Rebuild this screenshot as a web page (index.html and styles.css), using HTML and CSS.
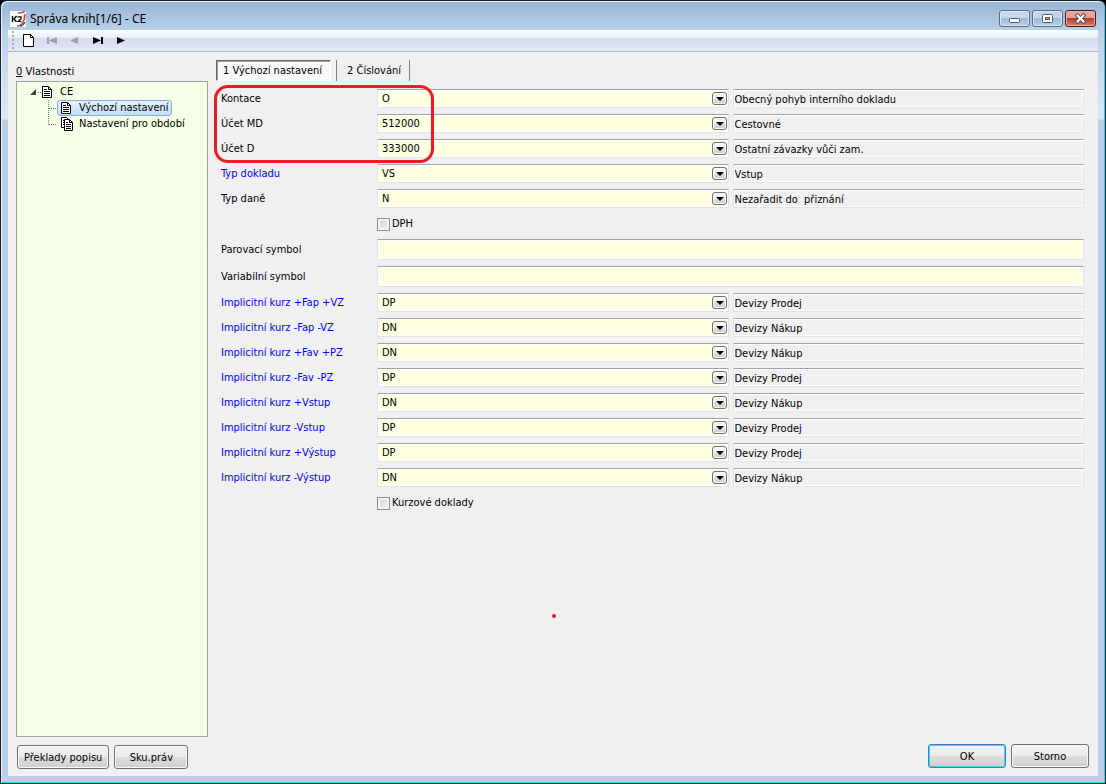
FILE: index.html
```html
<!DOCTYPE html>
<html lang="cs">
<head>
<meta charset="utf-8">
<title>Správa knih[1/6] - CE</title>
<link rel="stylesheet" href="styles.css">
</head>
<body>
<svg class="defs" aria-hidden="true">
  <symbol id="doc" viewBox="0 0 11 12"><path d="M.5.5h6l3 3v8h-9z" fill="#fff" stroke="#000"/><path d="M6.500.5v3h3M2 3.500h3M2 5.500h6M2 7.500h6M2 9.500h6" fill="none" stroke="#000"/></symbol>
  <symbol id="docs" viewBox="0 0 13 14"><path d="M.5.5h5l2 2v8h-7z" fill="#fff" stroke="#000"/><path d="M2 3.500h2M2 5.500h2M2 7.500h2" stroke="#000"/><path d="M3.500 2.500h5l3 3v8h-8z" fill="#fff" stroke="#000"/><path d="M8.500 2.500v3h3M5 5.500h2M5 7.500h5M5 9.500h5M5 11.500h5" fill="none" stroke="#000"/></symbol>
</svg>
<div class="window">
  <header class="titlebar">
    <svg class="logo" viewBox="0 0 16 16" aria-hidden="true"><rect width="16" height="16" fill="#fff"/><path d="M8 2c3 0 5 0 7-2M7 15c5 0 8-5 8-12" fill="none" stroke="#c2404a" stroke-width="1.500"/><path d="M11 13c2-3 3-6 2-9" fill="none" stroke="#e8a45c"/><path d="M10 15c3 0 4-2 5-4" fill="none" stroke="#51488f" stroke-width="1.500"/><path d="M2.500 5v6M6.500 5L4 8l2.500 3" fill="none" stroke="#111" stroke-width="1.500"/><path d="M7.500 5.800h3.500v2L8.200 10.300h3.300" fill="none" stroke="#111" stroke-width="1.300"/></svg>
    <h1 class="title">Správa knih[1/6] - CE</h1>
    <div class="window-buttons">
      <button class="win-btn" type="button" aria-label="Minimalizovat"><svg width="13" height="11" viewBox="0 0 13 11"><rect x="1.500" y="5.500" width="10" height="4" rx="1" fill="#fff" stroke="#535666"/></svg></button>
      <button class="win-btn" type="button" aria-label="Maximalizovat"><svg width="13" height="11" viewBox="0 0 13 11"><rect x="1.500" y="1.500" width="10" height="8" rx="1" fill="#fff" stroke="#535666"/><rect x="4.500" y="4.500" width="4" height="2" fill="#9dbbd8" stroke="#535666"/></svg></button>
      <button class="win-btn close" type="button" aria-label="Zavřít"><svg width="13" height="11" viewBox="0 0 13 11"><path d="M3.500 2.500l6 6M9.500 2.500l-6 6" stroke="#535666" stroke-width="4" stroke-linecap="square"/><path d="M3.500 2.500l6 6M9.500 2.500l-6 6" stroke="#fff" stroke-width="2" stroke-linecap="square"/></svg></button>
    </div>
  </header>
  <div class="client">
    <nav class="toolbar" aria-label="Panel nástrojů">
      <span class="grip"></span>
      <button class="tool" type="button" aria-label="Nový"><svg width="12" height="13" viewBox="0 0 12 13"><path d="M1 .5h6.500l3 3v9H.5V.5z" fill="#fff" stroke="#000"/><path d="M7.500.5v3h3" fill="none" stroke="#000"/></svg></button>
      <button class="tool" type="button" aria-label="První" disabled><svg width="12" height="9" viewBox="0 0 12 9"><path d="M1 1h2v7H1zM3 4.500L11 1v7z"/></svg></button>
      <button class="tool" type="button" aria-label="Předchozí" disabled><svg width="12" height="9" viewBox="0 0 12 9"><path d="M1 4.500L9 1v7z"/></svg></button>
      <button class="tool" type="button" aria-label="Poslední"><svg width="12" height="9" viewBox="0 0 12 9"><path d="M1 1l8 3.500L1 8zM9 1h2v7H9z"/></svg></button>
      <button class="tool" type="button" aria-label="Další"><svg width="12" height="9" viewBox="0 0 12 9"><path d="M2 1l8 3.500L2 8z"/></svg></button>
    </nav>
    <main class="main">
      <section class="side">
        <h2 class="side-title"><u>0</u> Vlastnosti</h2>
        <div class="tree" role="tree" aria-label="Vlastnosti">
          <div class="node root" role="treeitem" aria-expanded="true">
            <svg width="12" height="16" viewBox="0 0 12 16"><path d="M6 5v6H0z" fill="#404040"/><path d="M8 8.500h4" stroke="#808080" stroke-dasharray="1 1"/></svg>
            <svg width="11" height="12"><use href="#doc"/></svg>
            <span class="node-text">CE</span>
          </div>
          <div class="node child" role="treeitem" aria-selected="true">
            <svg width="9" height="16" viewBox="0 0 9 16"><path d="M.5 0v16M1 8.500h8" stroke="#808080" stroke-dasharray="1 1"/></svg>
            <span class="node-body selected"><svg width="13" height="12" viewBox="0 0 13 12"><use href="#doc" width="11" height="12"/></svg><span class="node-text">Výchozí nastavení</span></span>
          </div>
          <div class="node child" role="treeitem">
            <svg width="9" height="16" viewBox="0 0 9 16"><path d="M.5 0v9M1 8.500h8" stroke="#808080" stroke-dasharray="1 1"/></svg>
            <span class="node-body"><svg width="13" height="14"><use href="#docs"/></svg><span class="node-text">Nastavení pro období</span></span>
          </div>
        </div>
        <div class="buttons">
          <button class="btn" type="button">Překlady popisu</button>
          <button class="btn narrow" type="button">Sku.práv</button>
        </div>
      </section>
      <section class="content">
        <div class="tabs" role="tablist">
          <button class="tab active" type="button" role="tab" aria-selected="true">1 Výchozí nastavení</button>
          <button class="tab" type="button" role="tab" aria-selected="false">2 Číslování</button>
        </div>
        <form class="form" id="form">
          <span class="highlight"></span>
          <label for="f1">Kontace</label><span class="combo"><select id="f1"><option>O</option></select></span><input readonly aria-label="Popis: Kontace" value="Obecný pohyb interního dokladu">
          <label for="f2">Účet MD</label><span class="combo"><select id="f2"><option>512000</option></select></span><input readonly aria-label="Popis: Účet MD" value="Cestovné">
          <label for="f3">Účet D</label><span class="combo"><select id="f3"><option>333000</option></select></span><input readonly aria-label="Popis: Účet D" value="Ostatní závazky vůči zam.">
          <label class="link" for="f4">Typ dokladu</label><span class="combo"><select id="f4"><option>VS</option></select></span><input readonly aria-label="Popis: Typ dokladu" value="Vstup">
          <label for="f5">Typ daně</label><span class="combo"><select id="f5"><option>N</option></select></span><input readonly aria-label="Popis: Typ daně" value="Nezařadit do  přiznání">
          <label class="check"><input type="checkbox">DPH</label>
          <label for="f6">Parovací symbol</label><input class="wide" id="f6" type="text">
          <label for="f7">Variabilní symbol</label><input class="wide" id="f7" type="text">
          <label class="link" for="k1">Implicitní kurz +Fap +VZ</label><span class="combo"><select id="k1"><option>DP</option></select></span><input readonly aria-label="Popis: +Fap +VZ" value="Devizy Prodej">
          <label class="link" for="k2">Implicitní kurz -Fap -VZ</label><span class="combo"><select id="k2"><option>DN</option></select></span><input readonly aria-label="Popis: -Fap -VZ" value="Devizy Nákup">
          <label class="link" for="k3">Implicitní kurz +Fav +PZ</label><span class="combo"><select id="k3"><option>DN</option></select></span><input readonly aria-label="Popis: +Fav +PZ" value="Devizy Nákup">
          <label class="link" for="k4">Implicitní kurz -Fav -PZ</label><span class="combo"><select id="k4"><option>DP</option></select></span><input readonly aria-label="Popis: -Fav -PZ" value="Devizy Prodej">
          <label class="link" for="k5">Implicitní kurz +Vstup</label><span class="combo"><select id="k5"><option>DN</option></select></span><input readonly aria-label="Popis: +Vstup" value="Devizy Nákup">
          <label class="link" for="k6">Implicitní kurz -Vstup</label><span class="combo"><select id="k6"><option>DP</option></select></span><input readonly aria-label="Popis: -Vstup" value="Devizy Prodej">
          <label class="link" for="k7">Implicitní kurz +Výstup</label><span class="combo"><select id="k7"><option>DP</option></select></span><input readonly aria-label="Popis: +Výstup" value="Devizy Prodej">
          <label class="link" for="k8">Implicitní kurz -Výstup</label><span class="combo"><select id="k8"><option>DN</option></select></span><input readonly aria-label="Popis: -Výstup" value="Devizy Nákup">
          <label class="check"><input type="checkbox">Kurzové doklady</label>
          <span class="dot"></span>
        </form>
        <div class="buttons end">
          <button class="btn default" type="submit" form="form">OK</button>
          <button class="btn" type="button">Storno</button>
        </div>
      </section>
    </main>
  </div>
</div>
</body>
</html>
```
FILE: styles.css
```css
* { box-sizing: border-box; }

body {
  margin: 0;
  background: #000;
  font: 11px/16px "DejaVu Sans Condensed", Tahoma, "DejaVu Sans", sans-serif;
  color: #000;
}

button, input, select { font: inherit; color: inherit; }

.defs { position: absolute; width: 0; height: 0; }

.window {
  display: flex;
  flex-direction: column;
  min-height: 100vh;
  padding: 1px 6px 6px;
  border: 1px solid #1c2430;
  border-radius: 7px 7px 0 0;
  background: linear-gradient(#98b4d4, #b9d1ea 30px, #dce8f5 118px, #b9d1ea 119px);
  box-shadow: inset 1px 1px #e3eef9, inset -1px -1px #35cdf2;
}

.titlebar {
  display: flex;
  align-items: center;
  height: 28px;
  padding: 5px 3px 0;
}

.logo { width: 16px; height: 16px; }

.title { margin: 0 0 0 4px; font: 12px/16px "Noto Sans", sans-serif; }

.window-buttons { display: flex; gap: 2px; margin-left: auto; }

.win-btn {
  display: grid;
  place-items: center;
  width: 31px;
  height: 17px;
  padding: 0;
  border: 1px solid #5b6b83;
  border-radius: 3px;
  background: linear-gradient(#c5d7ea 50%, #9fbad6 50%, #b9d1ea);
  box-shadow: inset 0 0 0 1px #dbe7f4;
}

.win-btn.close {
  border-color: #431422;
  background: linear-gradient(#e5a497 50%, #b93a22 50%, #d88468);
  box-shadow: inset 0 0 0 1px #e7b5a9;
}

.client {
  display: flex;
  flex: 1;
  flex-direction: column;
  margin: 0 1px 1px;
  background: #f0f0f0;
}

.toolbar {
  display: flex;
  align-items: center;
  gap: 3px;
  height: 22px;
  padding-left: 4px;
  border-bottom: 1px solid #b0b5cc;
  background: linear-gradient(#fff, #e9edf8 8px, #d3daef 8px, #e3e8f6);
}

.grip { width: 2px; height: 20px; margin-right: 2px; background: repeating-linear-gradient(#a8adba 0 2px, transparent 2px 4px); }

.tool {
  display: grid;
  place-items: center;
  width: 20px;
  height: 20px;
  padding: 0;
  border: 0;
  background: none;
}

.tool:disabled { fill: #a0a0a0; }

.main { display: flex; flex: 1; gap: 8px; padding: 8px 9px 7px 8px; }

.side { display: flex; flex-direction: column; width: 192px; }

.side-title { margin: 4px 0 1px; font: inherit; }

.tree {
  flex: 1;
  margin-bottom: 8px;
  padding: 2px 13px;
  border: 1px solid #a0a0a0;
  background: #f5ffe6;
}

.node { display: flex; align-items: center; height: 16px; white-space: nowrap; }
.root .node-text { margin-left: 7px; }
.child { padding-left: 18px; }
.node-body { display: flex; align-items: center; height: 16px; gap: 5px; padding: 0 2px 0 3px; border: 1px solid transparent; }
.selected { border-color: #84acdd; border-radius: 3px; background: linear-gradient(#e5f1fc, #c4ddf8); }

.buttons { display: flex; gap: 5px; padding-left: 1px; }
.end { justify-content: flex-end; margin-top: auto; padding: 0 0 1px; }

.btn {
  min-width: 78px;
  height: 24px;
  padding: 1px 6px 0;
  border: 1px solid #707070;
  border-radius: 3px;
  background: linear-gradient(#f2f2f2, #ebebeb 50%, #dddddd 50%, #cfcfcf);
  box-shadow: inset 0 0 0 1px #fafafa;
  white-space: nowrap;
}

.narrow { min-width: 74px; }
.default { border-color: #3c7fb1; box-shadow: inset 0 0 0 1px #48d0f5; }

.content { display: flex; flex: 1; flex-direction: column; min-width: 0; }

.tabs { display: flex; gap: 5px; }

.tab {
  height: 21px;
  padding: 0 8px 0 10px;
  border: solid #808080;
  border-width: 0 1px 0 1px;
  background: none;
}

.tab.active {
  padding: 1px 8px 0 6px;
  border: 1px solid;
  border-color: #696969 #fff #fff #696969;
  background: repeating-conic-gradient(#fff 0 25%, #f0f0f0 0 50%) 0 0 / 2px 2px;
  box-shadow: inset 1px 1px #a0a0a0;
}

.form {
  position: relative;
  display: grid;
  grid-template-columns: 152px minmax(0, 1fr) minmax(0, 1fr);
  gap: 6px 4px;
  margin-top: 8px;
  padding: 0 5px;
}

.form > label { padding-top: 1px; line-height: 18px; white-space: nowrap; }
.form > .link { color: #0000ff; }

.form > input, .combo select {
  width: 100%;
  height: 19px;
  margin: 0;
  padding: 1px 1px 0;
  border: 1px solid;
  border-color: #a0a3ad #e2e3ea #e2e3ea #e2e3ea;
  border-radius: 1px;
  background: #f0f0f0;
  box-shadow: inset 0 0 0 1px #fff;
  outline: 0;
}

.combo { position: relative; display: block; }

.combo select { padding: 1px 20px 0 4px; background: #ffffe1; appearance: none; }

.combo::before, .combo::after { position: absolute; content: ""; pointer-events: none; }

.combo::before {
  box-sizing: border-box;
  top: 3px;
  right: 2px;
  width: 15px;
  height: 13px;
  border: 1px solid #707070;
  border-radius: 3px;
  background: linear-gradient(#f4f4f4 50%, #dddddd 50%, #d0d0d0);
  box-shadow: inset 0 0 0 1px #fafafa;
}

.combo::after {
  top: 8px;
  right: 5px;
  border: solid transparent;
  border-width: 4px 4px 0;
  border-top-color: #000;
}

.form > .wide { grid-column: 2 / 4; height: 21px; background: #ffffe1; }
.form > label:has(+ .wide) { line-height: 20px; }

.form > .check { display: flex; align-items: center; grid-column: 2 / 4; gap: 2px; height: 19px; }

.check input {
  width: 13px;
  height: 13px;
  margin: 0;
  border: 1px solid #8e8f8f;
  background: linear-gradient(135deg, #cbcfd5, #f6f6f6);
  box-shadow: inset 0 0 0 2px #f4f4f4;
  appearance: none;
}

.highlight {
  position: absolute;
  top: -4px;
  left: -2px;
  width: 220px;
  height: 78px;
  border: 3px solid #ed1c24;
  border-radius: 14px;
  z-index: 1;
  pointer-events: none;
}

.dot {
  position: absolute;
  top: 525px;
  left: 336px;
  width: 4px;
  height: 4px;
  border-radius: 2px;
  background: #ed1c24;
}
```
